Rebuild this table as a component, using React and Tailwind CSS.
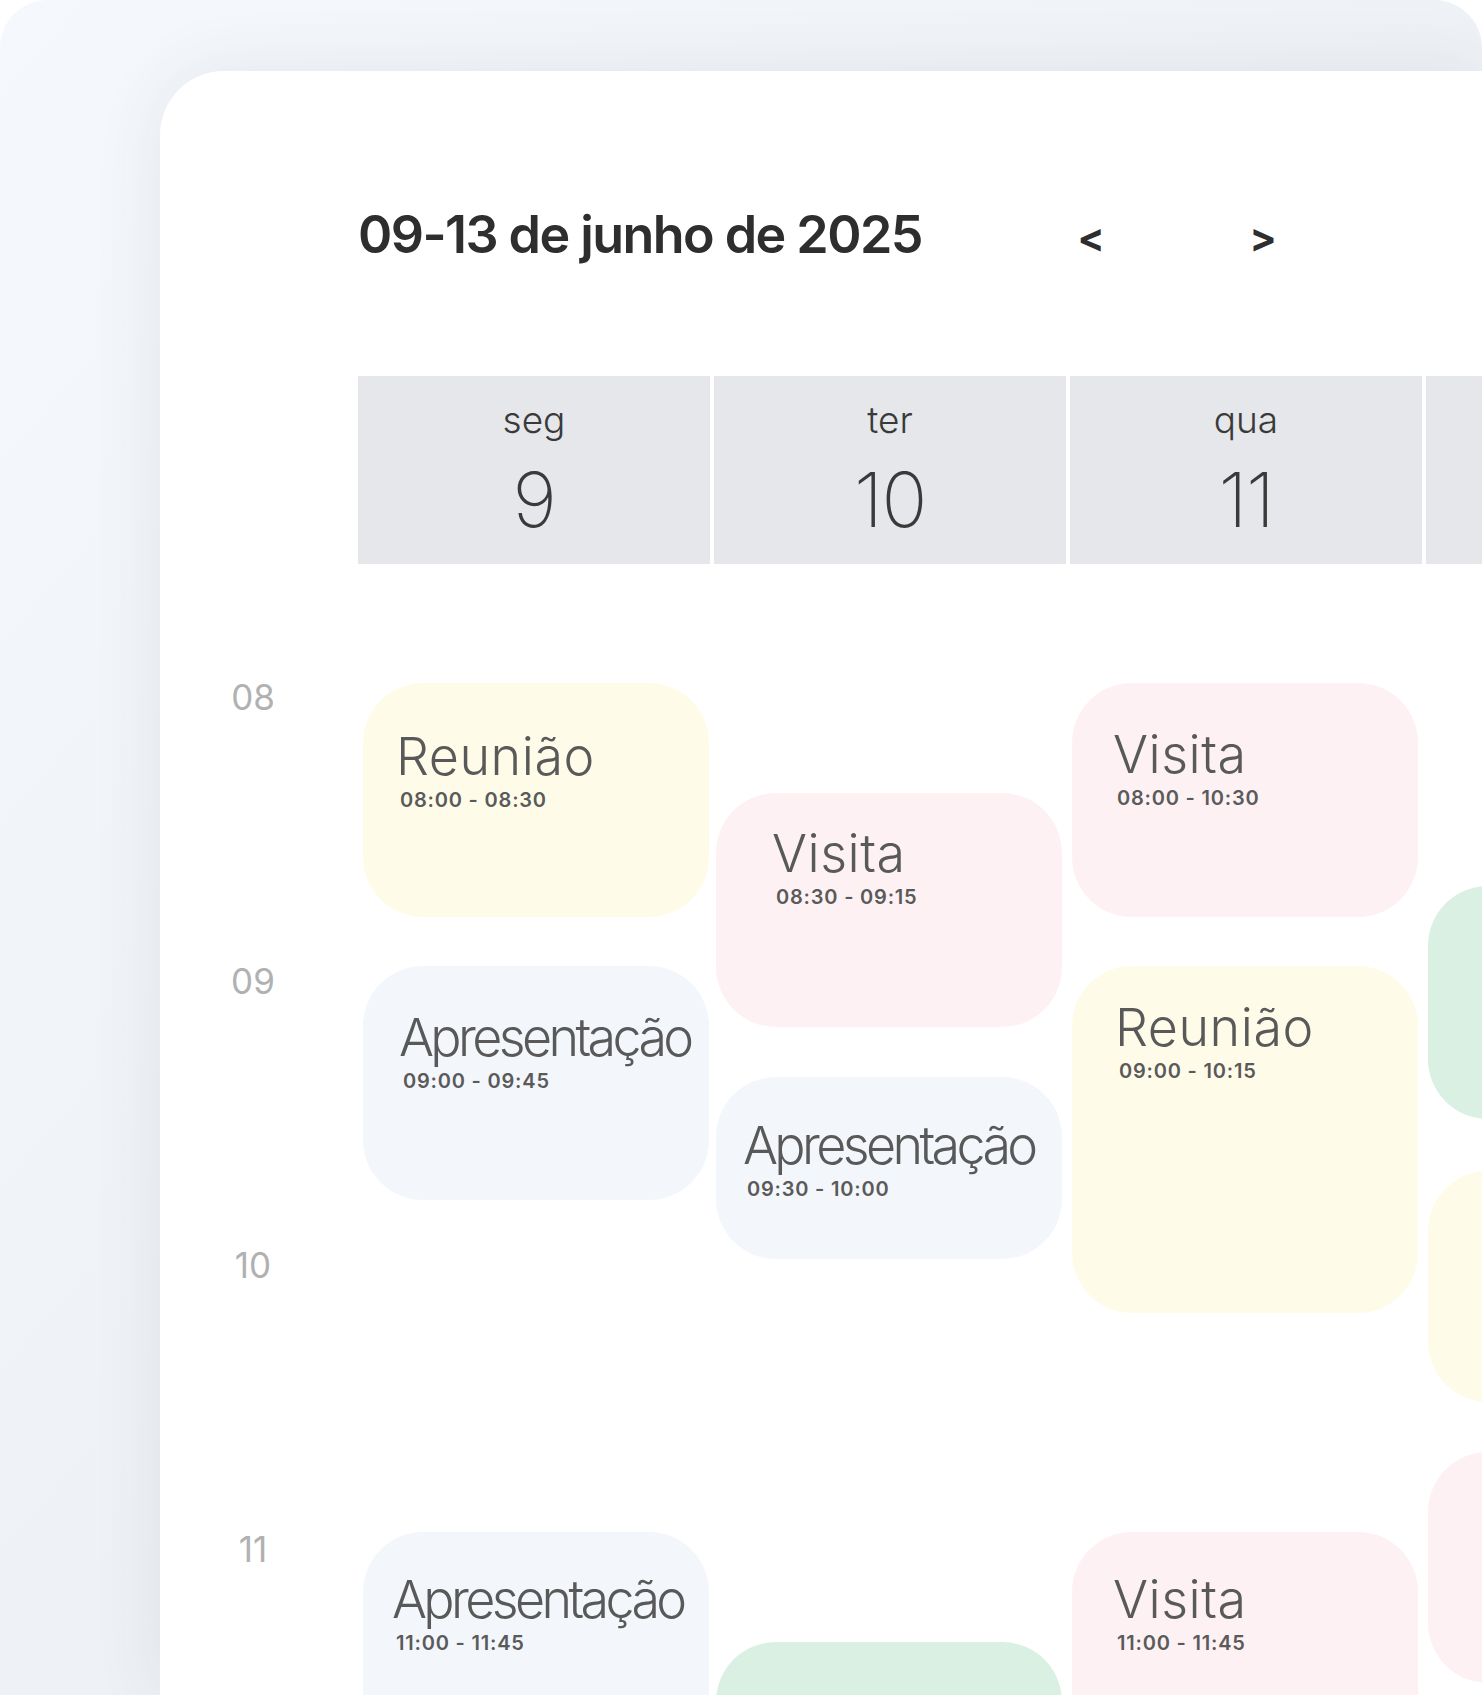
import React from "react";

const COLORS = {
  yellow: "bg-[#fefce9]",
  pink: "bg-[#fdf1f3]",
  blue: "bg-[#f3f6fb]",
  green: "bg-[#d9f0e3]",
};

const days = [
  {
    day: "seg",
    num: "9",
    first: true,
    events: [
      { title: "Reunião", time: "08:00 - 08:30", color: "yellow", top: 119, h: 234, pl: 33, pt: 48 },
      { title: "Apresentação", time: "09:00 - 09:45", color: "blue", top: 402, h: 234, pl: 36, pt: 46, tight: true },
      { title: "Apresentação", time: "11:00 - 11:45", color: "blue", top: 968, h: 234, pl: 29, pt: 42, tight: true },
    ],
  },
  {
    day: "ter",
    num: "10",
    events: [
      { title: "Visita", time: "08:30 - 09:15", color: "pink", top: 229, h: 234, pl: 56, pt: 35 },
      { title: "Apresentação", time: "09:30 - 10:00", color: "blue", top: 513, h: 182, pl: 27, pt: 43, tight: true },
      { color: "green", top: 1078, h: 234 },
    ],
  },
  {
    day: "qua",
    num: "11",
    events: [
      { title: "Visita", time: "08:00 - 10:30", color: "pink", top: 119, h: 234, pl: 41, pt: 46 },
      { title: "Reunião", time: "09:00 - 10:15", color: "yellow", top: 402, h: 347, pl: 43, pt: 36 },
      { title: "Visita", time: "11:00 - 11:45", color: "pink", top: 968, h: 234, pl: 41, pt: 42 },
    ],
  },
  {
    day: "",
    num: "",
    events: [
      { color: "green", top: 322, h: 233 },
      { color: "yellow", top: 607, h: 231 },
      { color: "pink", top: 888, h: 231 },
    ],
  },
];

const hours = [
  { label: "08", top: 116 },
  { label: "09", top: 400 },
  { label: "10", top: 684 },
  { label: "11", top: 968 },
];

function EventCard({ ev, first }) {
  return (
    <div
      className={`absolute w-[346px] rounded-[60px] ${first ? "left-[5px] w-[345px]" : "left-[2px]"} ${COLORS[ev.color]}`}
      style={{ top: ev.top, height: ev.h, paddingLeft: ev.pl, paddingTop: ev.pt }}
    >
      {ev.title && (
        <>
          <div
            className={`text-[52px] leading-none font-light text-[#595959] whitespace-nowrap ${
              ev.tight ? "tracking-[-0.07em]" : "tracking-[0.01em]"
            }`}
          >
            {ev.title}
          </div>
          <div className="mt-[7px] ml-[4px] text-[20px] leading-none font-semibold text-[#5a5a5a] tracking-[0.04em] whitespace-nowrap">
            {ev.time}
          </div>
        </>
      )}
    </div>
  );
}

function DayColumn({ d }) {
  return (
    <div className="w-[352px] shrink-0 flex flex-col">
      <div className="h-[188px] bg-[#e5e7ea] flex flex-col items-center pt-[25px] text-[#3a3a3a]">
        {d.day && (
          <>
            <span className="text-[37px] leading-none font-light">{d.day}</span>
            <span className="mt-[23px] text-[76px] leading-none font-extralight tracking-[-0.02em]">{d.num}</span>
          </>
        )}
      </div>
      <div className="relative h-[1200px]">
        {d.events.map((ev, i) => (
          <EventCard key={i} ev={ev} first={d.first} />
        ))}
      </div>
    </div>
  );
}

export default function App() {
  return (
    <div
      className="w-[1482px] h-[1695px] overflow-hidden bg-white"
      style={{ fontFamily: "Inter, 'Noto Sans', sans-serif" }}
    >
      <div className="h-full rounded-t-[48px] bg-gradient-to-br from-[#f5f8fc] via-[#eef1f5] to-[#e9ecf0] pt-[71px] pl-[160px]">
        <div className="h-full rounded-tl-[64px] bg-white shadow-[0_0_70px_rgba(70,85,110,0.09)] overflow-hidden">
          <header className="flex items-center pt-[138px] pl-[198px] h-[190px]">
            <h1 className="w-[708px] shrink-0 text-[52px] leading-none font-semibold tracking-[-0.03em] text-[#2e2e2e] whitespace-nowrap">
              09-13 de junho de 2025
            </h1>
            <button className="w-[50px] h-[52px] flex items-center justify-center text-[40px] leading-none font-bold text-[#2e2e2e] pt-[6px]">
              &lt;
            </button>
            <button className="ml-[122px] w-[50px] h-[52px] flex items-center justify-center text-[40px] leading-none font-bold text-[#2e2e2e] pt-[6px]">
              &gt;
            </button>
          </header>
          <div className="mt-[115px] flex">
            <div className="w-[198px] shrink-0 flex flex-col">
              <div className="h-[188px]" />
              <div className="relative h-[1200px]">
                {hours.map((h) => (
                  <div
                    key={h.label}
                    className="absolute left-0 w-[186px] text-center text-[35px] leading-none font-normal text-[#b1b1b1]"
                    style={{ top: h.top }}
                  >
                    {h.label}
                  </div>
                ))}
              </div>
            </div>
            <div className="flex gap-[4px]">
              {days.map((d, i) => (
                <DayColumn key={i} d={d} />
              ))}
            </div>
          </div>
        </div>
      </div>
    </div>
  );
}
